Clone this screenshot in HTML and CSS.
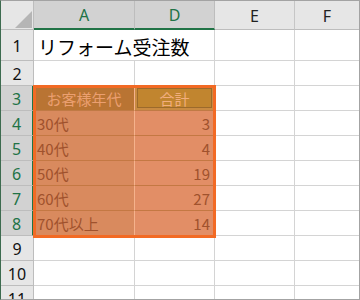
FILE: index.html
```html
<!DOCTYPE html>
<html lang="ja">
<head>
<meta charset="utf-8">
<link rel="stylesheet" href="styles.css">
</head>
<body>
<div class="sheet">
  <div class="corner"><svg width="33" height="29" viewBox="0 0 33 29"><polygon points="14,27 31,27 31,10" fill="#b5b5b5"/></svg></div>
  <div class="ch sel">A</div>
  <div class="ch sel">D</div>
  <div class="ch">E</div>
  <div class="ch last">F</div>

  <div class="rh">1</div>
  <div class="c title span2">リフォーム受注数</div>
  <div class="c"></div>
  <div class="c last"></div>

  <div class="rh">2</div>
  <div class="c"></div><div class="c"></div><div class="c"></div><div class="c last"></div>

  <div class="rh rsel">3</div>
  <div class="c hA">お客様年代</div>
  <div class="c hD"><span class="hDin">合計</span></div>
  <div class="c"></div><div class="c last"></div>

  <div class="rh rsel">4</div>
  <div class="c dA">30代</div><div class="c dD">3</div>
  <div class="c"></div><div class="c last"></div>

  <div class="rh rsel">5</div>
  <div class="c dA">40代</div><div class="c dD">4</div>
  <div class="c"></div><div class="c last"></div>

  <div class="rh rsel">6</div>
  <div class="c dA">50代</div><div class="c dD">19</div>
  <div class="c"></div><div class="c last"></div>

  <div class="rh rsel">7</div>
  <div class="c dA">60代</div><div class="c dD">27</div>
  <div class="c"></div><div class="c last"></div>

  <div class="rh rsel">8</div>
  <div class="c dA">70代以上</div><div class="c dD">14</div>
  <div class="c"></div><div class="c last"></div>

  <div class="rh">9</div>
  <div class="c"></div><div class="c"></div><div class="c"></div><div class="c last"></div>

  <div class="rh">10</div>
  <div class="c"></div><div class="c"></div><div class="c"></div><div class="c last"></div>

  <div class="rh">11</div>
  <div class="c"></div><div class="c"></div><div class="c"></div><div class="c last"></div>

  <div class="selection"></div>
</div>
</body>
</html>
```

FILE: styles.css
```css
* { box-sizing: border-box; }
html, body { margin: 0; padding: 0; background: #fff; }

.sheet {
  position: relative;
  width: 360px;
  height: 300px;
  overflow: hidden;
  border-top: 1px solid #a3a3a3;
  border-right: 1px solid #a3a3a3;
  border-bottom: 1px solid #a3a3a3;
  border-left: 1px solid #3d6b4f;
  display: grid;
  grid-template-columns: 33px 101px 80px 80px 64px;
  grid-template-rows: 29px 31px repeat(9, 25px) 25px;
  font-family: "Noto Sans CJK JP", "Noto Sans", sans-serif;
}

.corner {
  background: #e6e6e6;
  border-right: 1px solid #bdbdbd;
  border-bottom: 1px solid #bdbdbd;
  position: relative;
}
.corner svg { position: absolute; left: 0; top: 0; }

.ch {
  background: #e6e6e6;
  border-right: 1px solid #c6c6c6;
  border-bottom: 1px solid #bdbdbd;
  display: flex;
  align-items: center;
  justify-content: center;
  font-family: "Noto Sans", "Liberation Sans", sans-serif;
  font-size: 16px;
  color: #222;
  padding-top: 1px;
}
.ch.sel {
  background: #d2d2d2;
  color: #217346;
  border-bottom: 2px solid #217346;
  border-right-color: #bdbdbd;
}
.ch.last { border-right: none; }

.rh {
  background: #e6e6e6;
  border-right: 1px solid #bdbdbd;
  border-bottom: 1px solid #bdbdbd;
  display: flex;
  align-items: center;
  justify-content: center;
  font-family: "Noto Sans", "Liberation Sans", sans-serif;
  font-size: 16px;
  color: #111;
  padding-top: 1px;
}
.rh.rsel {
  background: #d2d2d2;
  color: #217346;
  border-right: 2px solid #217346;
}

.c {
  border-right: 1px solid #d4d4d4;
  border-bottom: 1px solid #d4d4d4;
  background: #fff;
  font-size: 15px;
  display: flex;
  align-items: center;
  white-space: nowrap;
  padding: 0 3px;
  color: #000;
}
.c.last { border-right: none; }
.span2 { grid-column: span 2; }
.title { font-size: 19px; padding-left: 4px; padding-top: 2px; }

.hA {
  background: #b97433;
  color: #eb9f70;
  justify-content: center;
  border-right: 1px solid #f5b28c;
  border-bottom: 1px solid #c07a45;
}
.hD {
  background: #c98b42;
  padding: 2px 2px 2px 2px;
  border-bottom: 1px solid #c07a45;
  border-right: 1px solid #c07a45;
}
.hDin {
  flex: 1;
  height: 100%;
  display: flex;
  align-items: center;
  justify-content: center;
  background: #c1852f;
  border: 1px solid #9c6a2b;
  color: #f2ae7e;
}
.dA {
  background: #d98a5e;
  color: #a0522d;
  border-right: 1px solid #f5b28c;
  border-bottom: 1px solid #c47843;
}
.dD {
  background: #e28e66;
  color: #a0522d;
  justify-content: flex-end;
  padding-right: 4px;
  border-bottom: 1px solid #c47843;
}

.selection {
  position: absolute;
  left: 32px;
  top: 84px;
  width: 183px;
  height: 153px;
  border: 3px solid #f26a24;
  pointer-events: none;
}
```
